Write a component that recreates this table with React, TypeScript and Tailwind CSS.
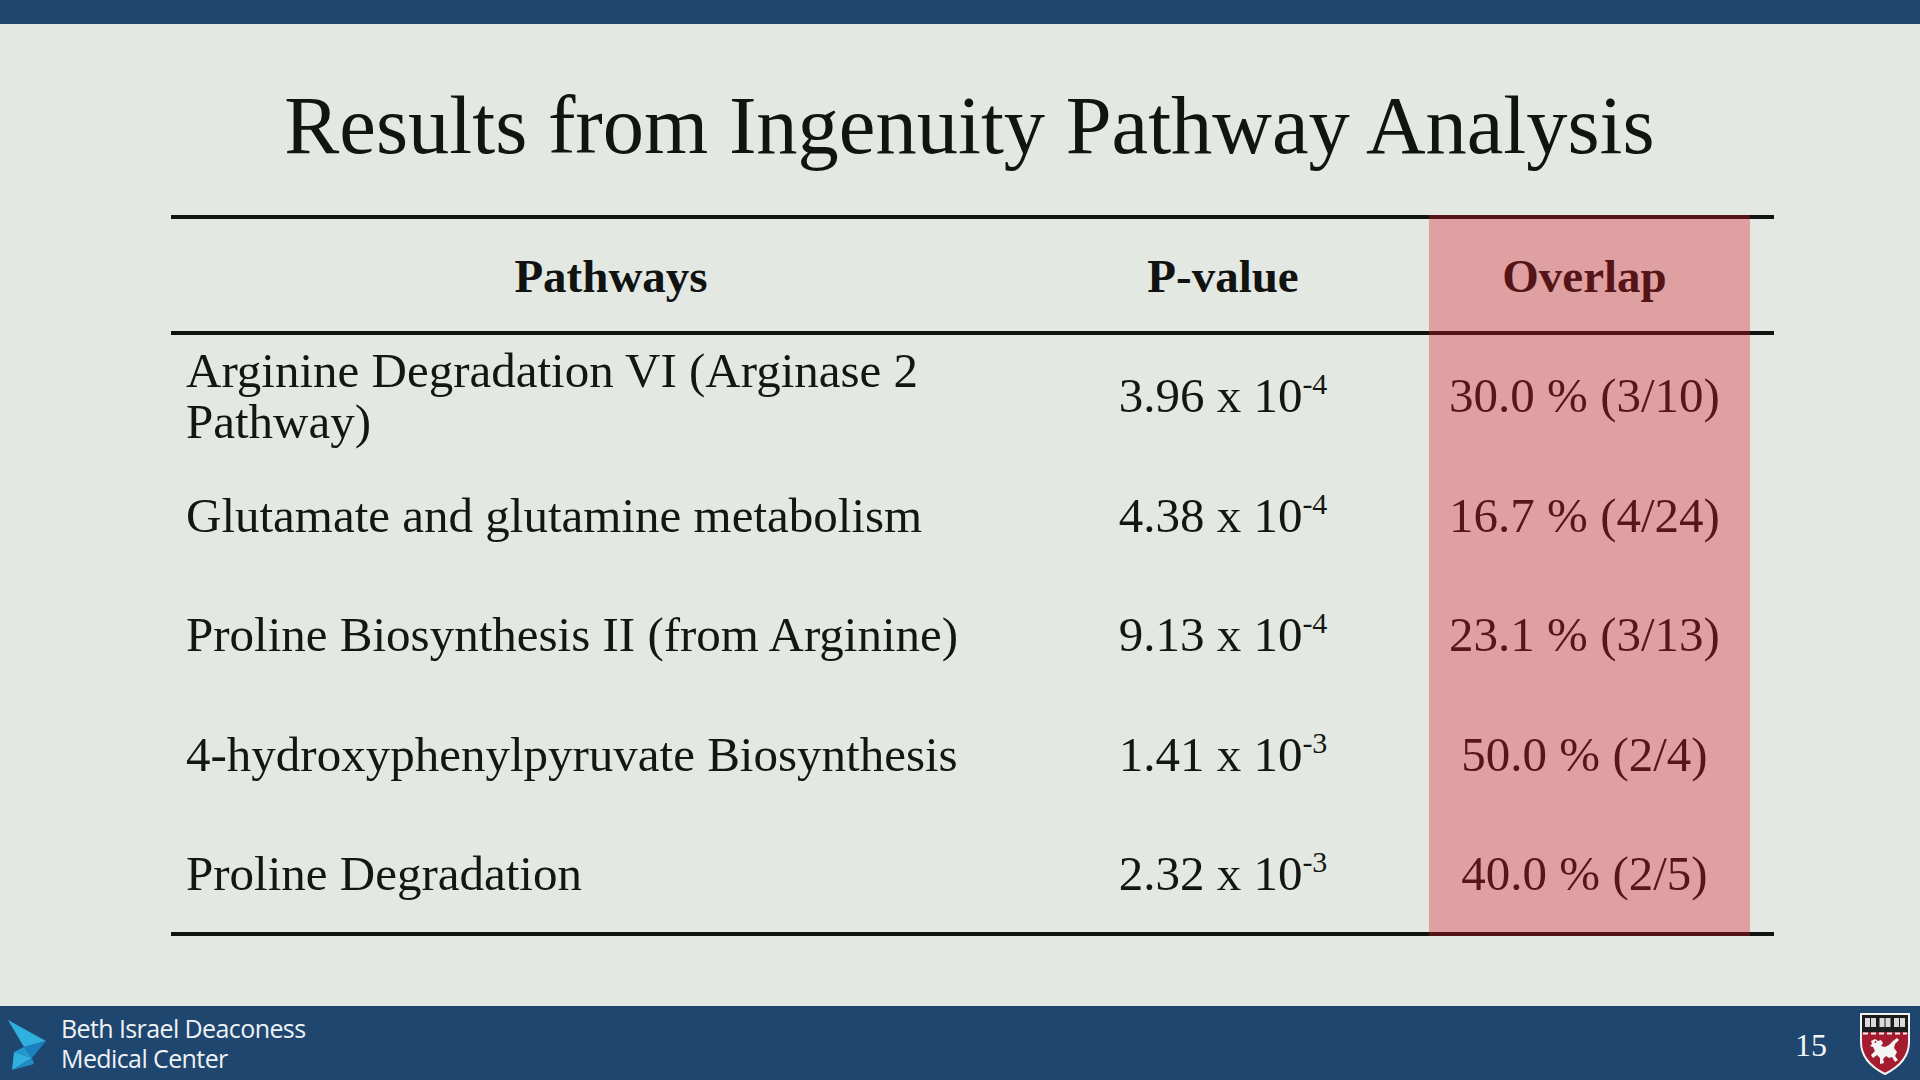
const rows = [
  { name: 'Arginine Degradation VI (Arginase 2 Pathway)', p: '3.96', exp: '-4', overlap: '30.0 % (3/10)' },
  { name: 'Glutamate and glutamine metabolism', p: '4.38', exp: '-4', overlap: '16.7 % (4/24)' },
  { name: 'Proline Biosynthesis II (from Arginine)', p: '9.13', exp: '-4', overlap: '23.1 % (3/13)' },
  { name: '4-hydroxyphenylpyruvate Biosynthesis', p: '1.41', exp: '-3', overlap: '50.0 % (2/4)' },
  { name: 'Proline Degradation', p: '2.32', exp: '-3', overlap: '40.0 % (2/5)' },
]

const BidmcMark = () => (
  <svg width="44" height="60" viewBox="0 0 44 60">
    <polygon points="4,6 42,27 20,33" fill="#2fb0de" />
    <polygon points="20,33 42,27 28,44" fill="#1b7fc0" />
    <polygon points="10,38 20,33 28,44" fill="#2398cf" />
    <polygon points="10,38 28,44 8,56" fill="#2fb0de" />
    <polygon points="28,44 8,56 30,50" fill="#1f8cc7" />
  </svg>
)

// simplified Harvard shield: books band, dashed chevron line, rampant lion
const HarvardShield = () => (
  <svg width="52" height="64" viewBox="0 0 52 64">
    <path d="M2 2 H50 V30 C50 46 38 56 26 62 C14 56 2 46 2 30 Z" fill="#a51c30" stroke="#f2f2f2" strokeWidth="2" />
    <rect x="3" y="3" width="46" height="17" fill="#1c1c1c" />
    <rect x="6" y="6" width="11" height="9" fill="#d9d9d9" />
    <rect x="20.5" y="6" width="11" height="9" fill="#d9d9d9" />
    <rect x="35" y="6" width="11" height="9" fill="#d9d9d9" />
    <line x1="11.5" y1="6" x2="11.5" y2="15" stroke="#1c1c1c" strokeWidth="1" />
    <line x1="26" y1="6" x2="26" y2="15" stroke="#1c1c1c" strokeWidth="1" />
    <line x1="40.5" y1="6" x2="40.5" y2="15" stroke="#1c1c1c" strokeWidth="1" />
    <line x1="4" y1="21.5" x2="48" y2="21.5" stroke="#f2f2f2" strokeWidth="2" strokeDasharray="5 3" />
    <path
      d="M12 29 L16 27 L19 29 L22 28 L24 31 L22 34 L26 35 L30 33 L34 29 L38 26 L40 28 L36 32 L35 36 L38 40 L36 44 L39 48 L36 50 L33 45 L30 46 L27 44 L24 47 L25 51 L21 52 L21 46 L18 43 L14 46 L12 43 L16 39 L14 35 L11 34 L13 32 Z"
      fill="#f4f4f4"
    />
    <circle cx="16.5" cy="30" r="0.9" fill="#a51c30" />
  </svg>
)

const App = () => {
  return (
    <div className="h-screen w-full flex flex-col bg-[#e3e8e3] overflow-hidden" style={{ fontFamily: '"Liberation Serif", serif' }}>
      <div className="h-[24px] bg-[#1f466e]" />

      <main className="flex-1 flex flex-col">
        <h1 className="mt-[60px] text-center text-[82.5px] leading-none text-[#111511] pl-[19px]">
          Results from Ingenuity Pathway Analysis
        </h1>

        <div className="relative ml-[171px] mt-[48px] w-[1603px]">
          <div className="border-y-4 border-[#111311]">
            <div className="grid grid-cols-[880px_344px_379px] h-[112px] items-center text-[47px] font-bold text-[#111311] pt-[3px]">
              <div className="text-center">Pathways</div>
              <div className="text-center">P-value</div>
              <div className="text-center">Overlap</div>
            </div>
          </div>
          <div className="border-b-4 border-[#111311]">
            {rows.map((r) => (
              <div key={r.name} className="grid grid-cols-[880px_344px_379px] h-[119.5px] items-center text-[49px] leading-[51px] text-[#141614] pt-[3px]">
                <div className="pl-[15px] pr-[8px]">{r.name}</div>
                <div className="text-center">
                  {r.p} x 10<sup className="text-[30px] top-[-0.6em]">{r.exp}</sup>
                </div>
                <div className="text-center">{r.overlap}</div>
              </div>
            ))}
          </div>
          <div className="absolute top-0 bottom-0 left-[1258px] w-[321px] bg-[#d51a24]/35" />
        </div>
      </main>

      <footer className="h-[74px] bg-[#1f466e] flex items-center">
        <div className="ml-[4px] mt-[2px]">
          <BidmcMark />
        </div>
        <div
          className="ml-[13px] text-[25px] leading-[30px] tracking-[-0.6px] text-[#eef2f6]"
          style={{ fontFamily: '"Open Sans", "Liberation Sans", sans-serif' }}
        >
          <div>Beth Israel Deaconess</div>
          <div>Medical Center</div>
        </div>
        <div className="ml-auto text-[32px] text-[#f2f4f6] mr-[32px] mt-[4px]">15</div>
        <div className="mr-[9px] mt-[2px]">
          <HarvardShield />
        </div>
      </footer>
    </div>
  )
}

export default App
